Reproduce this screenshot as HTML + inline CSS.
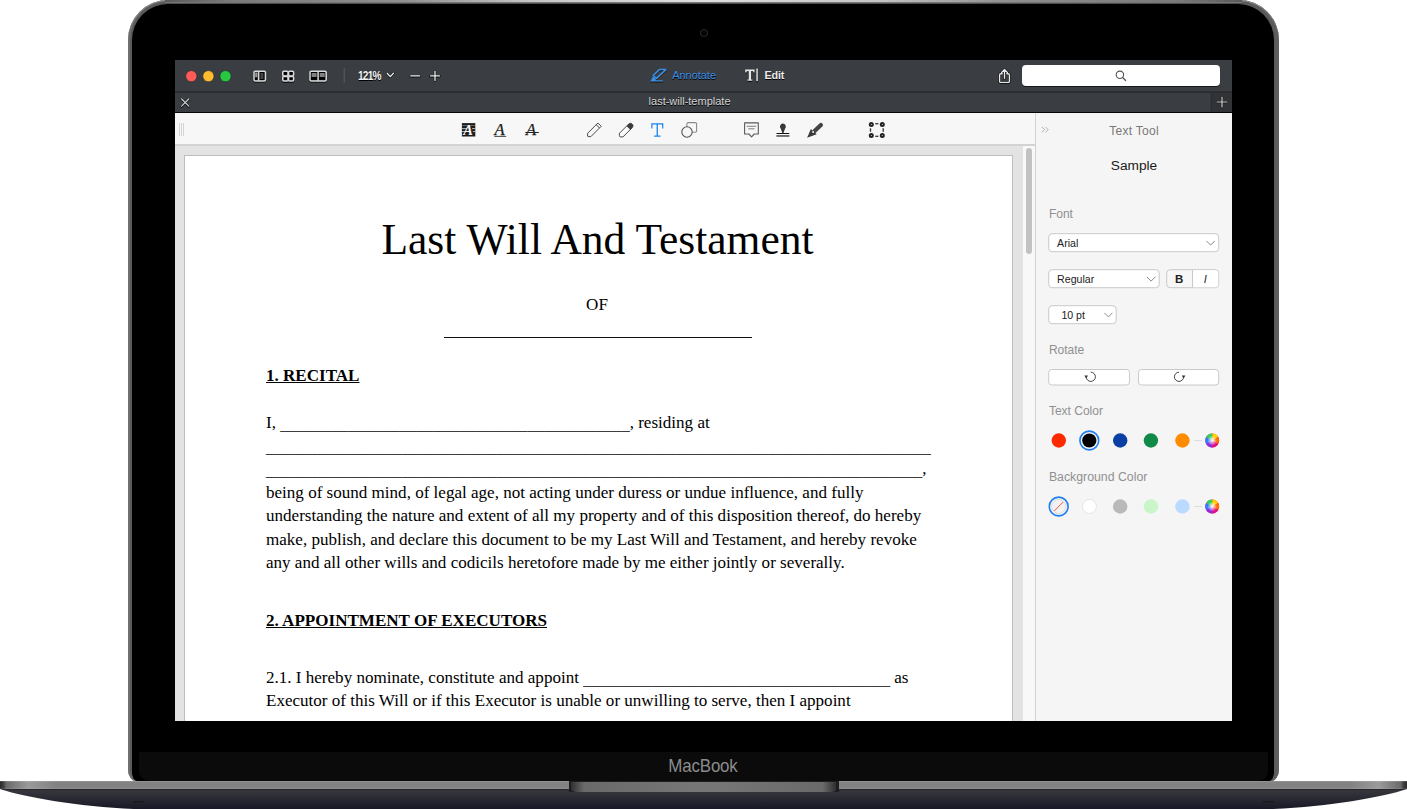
<!DOCTYPE html>
<html><head><meta charset="utf-8">
<style>
*{margin:0;padding:0;box-sizing:border-box}
html,body{width:1407px;height:809px;overflow:hidden;background:#fff;font-family:"Liberation Sans",sans-serif}
.a{position:absolute}
#lid{left:128px;top:0;width:1151px;height:781px;border-radius:40px 40px 8px 8px / 40px 40px 12px 12px;background:#5a5a5a;
 box-shadow:inset 0 1px 0 #909090, inset 2px 0 0 #6f6f6f, inset -3px 0 0 #5e5e5e}
#lidin{left:132px;top:4px;width:1142px;height:777px;border-radius:36px 36px 5px 5px / 36px 36px 9px 9px;background:#000}
#chin{left:139px;top:752px;width:1129px;height:29px;background:#0b0b0b;border-radius:0 0 10px 10px}
#cam{left:700px;top:29px;width:7.6px;height:7.6px;border-radius:50%;border:1px solid #2e2e2e;background:#050505}
#mb{left:603px;top:752px;width:200px;height:28px;text-align:center;color:#8c8c8c;font-size:19px;line-height:28px;letter-spacing:-0.2px;transform:scaleX(0.89)}
#base{left:0;top:781px;width:1407px;height:28px}
#screen{left:175px;top:60px;width:1057px;height:661px;overflow:hidden;background:#e3e3e3}
.doc{font-family:"Liberation Serif",serif;font-size:17.06px;line-height:20px;color:#000;white-space:nowrap}
.ui{white-space:nowrap;font-family:"Liberation Sans",sans-serif}
.u{position:relative;top:2px;color:#3c3c3c}
#sc{left:-175px;top:-60px;width:1407px;height:809px}
</style></head><body>
<div id="lid" class="a"></div>
<div id="lidin" class="a"></div>
<div class="a" style="left:165px;top:0;width:1077px;height:1.6px;background:linear-gradient(90deg,#5a5a5a 0%,#7a7a7a 6%,#909090 22%,#c5c5c5 34%,#dedede 50%,#c5c5c5 66%,#909090 78%,#7a7a7a 94%,#5a5a5a 100%)"></div>
<div class="a" style="left:165px;top:1.6px;width:1077px;height:2.4px;background:linear-gradient(180deg,#8a8a8a,#3a3a3a)"></div>
<div id="cam" class="a"></div>
<div id="chin" class="a"></div>
<div id="mb" class="a">MacBook</div>
<svg id="base" class="a" width="1407" height="28" viewBox="0 0 1407 28">
 <defs>
  <linearGradient id="gband" x1="0" x2="1" y1="0" y2="0">
   <stop offset="0" stop-color="#2a2a2a"/>
   <stop offset="0.0022" stop-color="#3a3a3a"/>
   <stop offset="0.0045" stop-color="#6a6a6a"/>
   <stop offset="0.02" stop-color="#9a9a9a"/>
   <stop offset="0.04" stop-color="#828282"/>
   <stop offset="0.96" stop-color="#828282"/>
   <stop offset="0.98" stop-color="#9a9a9a"/>
   <stop offset="0.9955" stop-color="#6a6a6a"/>
   <stop offset="0.9978" stop-color="#3a3a3a"/>
   <stop offset="1" stop-color="#2a2a2a"/>
  </linearGradient>
  <linearGradient id="gbot" x1="0" x2="0" y1="0" y2="1">
   <stop offset="0" stop-color="#1e1e22"/>
   <stop offset="0.08" stop-color="#36363d"/>
   <stop offset="1" stop-color="#181826"/>
  </linearGradient>
  <linearGradient id="gnotch" x1="0" x2="1" y1="0" y2="0">
   <stop offset="0" stop-color="#303030"/>
   <stop offset="0.05" stop-color="#6a6a6a"/>
   <stop offset="0.5" stop-color="#777"/>
   <stop offset="0.95" stop-color="#6a6a6a"/>
   <stop offset="1" stop-color="#303030"/>
  </linearGradient>
  <linearGradient id="gbandv" x1="0" x2="0" y1="0" y2="1">
   <stop offset="0" stop-color="#fff" stop-opacity="0.18"/>
   <stop offset="0.2" stop-color="#fff" stop-opacity="0"/>
   <stop offset="0.8" stop-color="#fff" stop-opacity="0"/>
   <stop offset="1" stop-color="#fff" stop-opacity="0.12"/>
  </linearGradient>
 </defs>
 <path d="M0 8 L1407 8 C1380 17 1320 27 1259 28.5 L148 28.5 C87 27 27 17 0 8 Z" fill="url(#gbot)"/>
 <rect x="0" y="0" width="1407" height="8" fill="url(#gband)"/>
 <rect x="0" y="0" width="1407" height="8" fill="url(#gbandv)"/>
 <rect x="569" y="0" width="270" height="11" fill="#1e1e22"/>
 <path d="M571 1 L836 1 L836 8 C836 10 835 11 830 11 L578 11 C573 11 571 10 571 8 Z" fill="url(#gnotch)"/>
 <rect x="133" y="20" width="11" height="1.5" fill="#111" opacity="0.6"/>
 <rect x="1263" y="20" width="11" height="1.5" fill="#111" opacity="0.6"/>
</svg>
<div id="screen" class="a"><div id="sc" class="a">
 <!-- title bar -->
 <div class="a" style="left:175px;top:60px;width:1057px;height:31px;background:#3a3d41"></div>
 <div class="a" style="left:175px;top:91px;width:1057px;height:2px;background:#2b2d30"></div>
 <div class="a" style="left:175px;top:93px;width:1057px;height:19px;background:#3a3d41"></div>
 <div class="a" style="left:175px;top:111.5px;width:1057px;height:1.7px;background:#050505"></div>
 <!-- toolbar -->
 <div class="a" style="left:175px;top:113px;width:860px;height:31px;background:#f7f7f7"></div>
 <div class="a" style="left:175px;top:144px;width:860px;height:2px;background:#d3d3d3"></div>
 <!-- right panel -->
 <div class="a" style="left:1034.5px;top:113px;width:1.2px;height:608px;background:#d2d2d2"></div>
 <div class="a" style="left:1036px;top:113px;width:196px;height:608px;background:#f5f5f5"></div>

 <!-- title bar contents -->
 <svg class="a" style="left:175px;top:60px" width="1057" height="53" viewBox="175 60 1057 53">
  <g>
   <circle cx="191.3" cy="76.2" r="5.6" fill="#fc5b57" stroke="#1d2a33" stroke-width="0.6"/>
   <circle cx="208.4" cy="76.2" r="5.6" fill="#fdbb2f" stroke="#1d2a33" stroke-width="0.6"/>
   <circle cx="225.5" cy="76.2" r="5.6" fill="#29c73f" stroke="#1d2a33" stroke-width="0.6"/>
  </g>
  <g fill="none" stroke="#000" stroke-width="1.6" transform="translate(0,0.9)" opacity="0.9">
   <rect x="254" y="71.3" width="11.5" height="9.6" rx="1.2"/>
   <line x1="258.6" y1="71.3" x2="258.6" y2="80.9"/>
   <rect x="282.75" y="71.35" width="5.3" height="4.6" rx="1"/><rect x="288.55" y="71.35" width="5.1" height="4.6" rx="1"/>
   <rect x="282.75" y="76.45" width="5.3" height="4.6" rx="1"/><rect x="288.55" y="76.45" width="5.1" height="4.6" rx="1"/>
   <rect x="310" y="71.3" width="16.2" height="9.6" rx="1.2"/>
   <line x1="318.1" y1="71.3" x2="318.1" y2="80.9"/>
  </g>
  <g fill="#000">
   <rect x="284" y="72.5" width="2.8" height="2.3"/><rect x="289.8" y="72.5" width="2.6" height="2.3"/>
   <rect x="284" y="77.6" width="2.8" height="2.3"/><rect x="289.8" y="77.6" width="2.6" height="2.3"/>
   <rect x="259.6" y="72.4" width="4.9" height="7.5"/><rect x="255" y="72.4" width="2.6" height="7.5"/>
   <rect x="311" y="72.4" width="6.2" height="7.5"/><rect x="319.1" y="72.4" width="6.2" height="7.5"/>
  </g>
  <g fill="none" stroke="#d9d9d9" stroke-width="1.5">
   <rect x="254" y="71.3" width="11.5" height="9.6" rx="1.2"/>
   <line x1="258.6" y1="71.3" x2="258.6" y2="80.9"/>
   <rect x="282.75" y="71.35" width="5.3" height="4.6" rx="1"/><rect x="288.55" y="71.35" width="5.1" height="4.6" rx="1"/>
   <rect x="282.75" y="76.45" width="5.3" height="4.6" rx="1"/><rect x="288.55" y="76.45" width="5.1" height="4.6" rx="1"/>
   <rect x="310" y="71.3" width="16.2" height="9.6" rx="1.2"/>
   <line x1="318.1" y1="71.3" x2="318.1" y2="80.9"/>
  </g>
  <rect x="255.2" y="72.5" width="2.2" height="4.8" fill="#9a9a9a"/>
  <rect x="260.4" y="73" width="3" height="6" fill="#555" opacity="0.8"/>
  <rect x="311.6" y="73" width="5" height="4" fill="#a0a0a0" opacity="0.8"/>
  <rect x="319.7" y="73" width="5" height="4" fill="#a0a0a0" opacity="0.8"/>
  <line x1="344.2" y1="68" x2="344.2" y2="83" stroke="#5a5c60" stroke-width="1"/>
  <!-- chevron, minus, plus -->
  <g fill="none" stroke="#000" stroke-width="2.4" stroke-linecap="round" opacity="0.8">
   <polyline points="387.2,73.3 390.3,76.8 393.4,73.3"/>
   <line x1="410.8" y1="76.4" x2="419.6" y2="76.4"/>
   <line x1="430.6" y1="76.2" x2="439.4" y2="76.2"/><line x1="435" y1="71.6" x2="435" y2="80.6"/>
  </g>
  <g fill="none" stroke="#f0f0f0" stroke-width="1.3" stroke-linecap="round">
   <polyline points="387.2,73.3 390.3,76.6 393.4,73.3"/>
   <line x1="410.8" y1="75.9" x2="419.6" y2="75.9"/>
   <line x1="430.6" y1="75.9" x2="439.4" y2="75.9"/><line x1="435" y1="71.4" x2="435" y2="80.4"/>
  </g>
  <!-- annotate icon -->
  <g transform="translate(0,0.9)" opacity="0.85">
   <path d="M659.3 69.6 L665.8 69.6 L656.5 78.4 L653.2 75.6 Z" fill="none" stroke="#1a0e00" stroke-width="1.5" stroke-linejoin="round"/>
   <path d="M653 76.4 L656 79 L655.6 80.2 L662.8 80.2 L662.8 81.5 L650.3 81.5 Z" fill="#1a0e00"/>
  </g>
  <path d="M659.3 69.6 L665.8 69.6 L656.5 78.4 L653.2 75.6 Z" fill="none" stroke="#3a8ee6" stroke-width="1.5" stroke-linejoin="round"/>
  <path d="M653 76.4 L656 79 L655.6 80.2 L662.8 80.2 L662.8 81.5 L650.3 81.5 Z" fill="#3a8ee6"/>
  <!-- T| edit icon -->
  <g fill="#000" opacity="0.85" transform="translate(0,0.9)">
   <path d="M745.2 69.4 H754.6 V72.6 H753.5 L753.1 71.2 H751 V79.4 H752.3 V80.8 H747.5 V79.4 H748.8 V71.2 H746.7 L746.3 72.6 H745.2 Z"/>
   <rect x="756.1" y="68.6" width="1.9" height="12.8"/>
  </g>
  <g fill="#e6e6e6">
   <path d="M745.2 69.4 H754.6 V72.6 H753.5 L753.1 71.2 H751 V79.4 H752.3 V80.8 H747.5 V79.4 H748.8 V71.2 H746.7 L746.3 72.6 H745.2 Z"/>
   <rect x="756.3" y="68.6" width="1.5" height="12.6"/>
  </g>
  <!-- share icon -->
  <g fill="none" stroke="#000" stroke-width="2.6" stroke-linecap="round" stroke-linejoin="round" opacity="0.85">
   <path d="M1002.2 73.8 H1000.8 Q999.6 73.8 999.6 75 V81.2 Q999.6 82.4 1000.8 82.4 H1008.2 Q1009.4 82.4 1009.4 81.2 V75 Q1009.4 73.8 1008.2 73.8 H1006.8"/>
   <path d="M1004.5 78.2 V69.6 M1001.6 72.4 L1004.5 69.6 L1007.4 72.4"/>
  </g>
  <g fill="none" stroke="#e8e8e8" stroke-width="1.4" stroke-linecap="round" stroke-linejoin="round">
   <path d="M1002.2 73.8 H1000.8 Q999.6 73.8 999.6 75 V81.2 Q999.6 82.4 1000.8 82.4 H1008.2 Q1009.4 82.4 1009.4 81.2 V75 Q1009.4 73.8 1008.2 73.8 H1006.8"/>
   <path d="M1004.5 78.2 V69.6 M1001.6 72.4 L1004.5 69.6 L1007.4 72.4"/>
  </g>
  <!-- search -->
  <rect x="1022" y="65.8" width="198" height="21" rx="4" fill="#000" opacity="0.8"/>
  <rect x="1022" y="65" width="198" height="21" rx="4" fill="#fff"/>
  <circle cx="1119.9" cy="74.8" r="3.7" fill="none" stroke="#555" stroke-width="1.1"/>
  <line x1="1122.6" y1="77.5" x2="1125.6" y2="80.5" stroke="#555" stroke-width="1.2" stroke-linecap="round"/>
  <!-- tab bar -->
  <rect x="1211" y="93" width="21" height="19" fill="#313336"/>
  <line x1="1211.2" y1="93" x2="1211.2" y2="112" stroke="#2a2c2f" stroke-width="1"/>
  <g stroke="#000" stroke-width="2.2" stroke-linecap="round" opacity="0.7">
   <line x1="181.6" y1="99.4" x2="188.8" y2="106.6"/><line x1="188.8" y1="99.4" x2="181.6" y2="106.6"/>
   <line x1="1217" y1="102.2" x2="1227" y2="102.2"/><line x1="1222" y1="97.2" x2="1222" y2="107.2"/>
  </g>
  <g stroke="#d0d0d0" stroke-width="1.2" stroke-linecap="round">
   <line x1="181.6" y1="99" x2="188.8" y2="106.2"/><line x1="188.8" y1="99" x2="181.6" y2="106.2"/>
   <line x1="1217" y1="102" x2="1227" y2="102"/><line x1="1222" y1="97" x2="1222" y2="107"/>
  </g>
 </svg>
 <div class="a ui" style="left:358px;top:67.6px;font-size:12px;line-height:16px;font-weight:bold;color:#f2f2f2;letter-spacing:-0.9px;transform:scaleX(0.84);transform-origin:0 0;text-shadow:0 0.8px 0.5px #000">121%</div>
 <div class="a ui" style="left:672.2px;top:66.6px;font-size:10.95px;line-height:16px;color:#3a8ee6;text-shadow:0 0.7px 0.6px #000">Annotate</div>
 <div class="a ui" style="left:764.6px;top:66.8px;font-size:10.8px;line-height:16px;font-weight:bold;color:#eaeaea;text-shadow:0 0.7px 0.6px #000;letter-spacing:-0.2px">Edit</div>
 <div class="a ui" style="left:648.6px;top:92.8px;font-size:11px;line-height:16px;color:#d6d6d6;text-shadow:0 0.5px 0.5px #000">last-will-template</div>

 <!-- toolbar icons -->
 <div class="a" style="left:179px;top:123px;width:1px;height:13px;background:#d4d4d4"></div>
 <div class="a" style="left:181px;top:123px;width:1px;height:13px;background:#d4d4d4"></div>
 <div class="a" style="left:183px;top:123px;width:1px;height:13px;background:#d4d4d4"></div>
 <svg class="a" style="left:440px;top:113px" width="460" height="31" viewBox="440 113 460 31">
  <!-- highlight text -->
  <rect x="461.9" y="123.1" width="13.4" height="13.4" fill="#1e1e1e"/>
  <g stroke="#f6f6f6" stroke-width="0.8" opacity="0.9">
   <line x1="461.9" y1="125.6" x2="475.3" y2="125.6" opacity="0.5"/>
   <line x1="461.9" y1="128.6" x2="467" y2="128.6"/><line x1="472" y1="128.6" x2="475.3" y2="128.6"/>
   <line x1="461.9" y1="131.6" x2="466" y2="131.6"/><line x1="472.8" y1="131.6" x2="475.3" y2="131.6"/>
  </g>
  <text x="463.3" y="134.6" font-family="Liberation Serif" font-style="italic" font-weight="bold" font-size="14.5" fill="#f6f6f6">A</text>
  <!-- underline A -->
  <text x="494.6" y="135" font-family="Liberation Serif" font-style="italic" font-size="16.5" fill="#1a1a1a" stroke="#1a1a1a" stroke-width="0.25">A</text>
  <line x1="494.3" y1="136.4" x2="506.2" y2="136.4" stroke="#333" stroke-width="0.9"/>
  <!-- strike A -->
  <text x="526.1" y="135" font-family="Liberation Serif" font-style="italic" font-size="16.5" fill="#1a1a1a" stroke="#1a1a1a" stroke-width="0.25">A</text>
  <line x1="525.3" y1="132.5" x2="538.8" y2="132.5" stroke="#222" stroke-width="1"/>
  <!-- pencil -->
  <g fill="none" stroke="#4a4a4a" stroke-width="1" stroke-linejoin="round">
   <path d="M587.6 133.3 L597.9 123.0 L601.2 126.3 L590.9 136.6 L588.2 136.6 Q587.6 136.6 587.6 136 Z"/>
   <line x1="596.2" y1="124.7" x2="599.5" y2="128"/>
  </g>
  <!-- eraser -->
  <path d="M619.4 133.3 L628.6 124.1 Q630.4 122.3 632.2 124.1 Q634 125.9 632.2 127.7 L623 136.9 L620.6 136.9 Q619.4 136.9 619.4 135.7 Z" fill="#fafafa" stroke="#4a4a4a" stroke-width="1" stroke-linejoin="round"/>
  <path d="M626.6 126.1 L628.6 124.1 Q630.4 122.3 632.2 124.1 Q634 125.9 632.2 127.7 L630.2 129.7 Z" fill="#3a3a3a"/>
  <!-- blue T -->
  <path d="M651.3 123.2 H663.3 V128.6 H662.2 L662 124.5 H657.9 V135.4 H660.5 V136.7 H654.1 V135.4 H656.6 V124.5 H652.6 L652.4 128.6 H651.3 Z" fill="#1a82ef"/>
  <!-- shapes -->
  <g fill="none" stroke="#555" stroke-width="1.1">
   <path d="M686.9 126.8 V123.8 Q686.9 122.6 688.1 122.6 H695.4 Q696.6 122.6 696.6 123.8 V131.1 Q696.6 132.3 695.4 132.3 H692.3" stroke="#8a8a8a"/>
   <circle cx="687" cy="132" r="5.2"/>
  </g>
  <!-- comment -->
  <g fill="none" stroke="#5a5a5a" stroke-width="1.1" stroke-linejoin="round">
   <path d="M744.6 122.9 H758.3 V134 H754.3 L751.6 136.8 L748.9 134 H744.6 Z"/>
  </g>
  <g stroke="#888" stroke-width="1.1">
   <line x1="746.6" y1="126.3" x2="756.2" y2="126.3"/>
   <line x1="748.2" y1="128.8" x2="754.6" y2="128.8"/>
  </g>
  <!-- stamp -->
  <path d="M782.9 123.6 A3.0 3.0 0 0 1 785.1 128.6 L783.5 132.9 H782.3 L780.7 128.6 A3.0 3.0 0 0 1 782.9 123.6 Z" fill="#383838"/>
  <rect x="776.4" y="132.9" width="13" height="1.2" rx="0.5" fill="#111"/>
  <rect x="776.4" y="135" width="13" height="1.9" fill="#6a6a6a"/>
  <!-- pen -->
  <line x1="820.9" y1="124.9" x2="814.6" y2="131.0" stroke="#444" stroke-width="4.2" stroke-linecap="round"/>
  <path d="M810.9 128.9 L816.7 134.2 L807.1 137.8 Z" fill="#3a3a3a"/>
  <circle cx="813.1" cy="132" r="0.95" fill="#f7f7f7"/>
  <!-- select -->
  <g fill="none" stroke="#222" stroke-width="2">
   <circle cx="871.3" cy="124.4" r="1.5"/><circle cx="882.3" cy="124.4" r="1.5"/>
   <circle cx="871.3" cy="135.5" r="1.5"/><circle cx="882.3" cy="135.5" r="1.5"/>
  </g>
  <g stroke="#333" stroke-width="1.3">
   <line x1="875.3" y1="123.7" x2="878.4" y2="123.7"/><line x1="875.3" y1="136.3" x2="878.4" y2="136.3"/>
   <line x1="870.5" y1="128.3" x2="870.5" y2="131.7"/><line x1="883.2" y1="128.3" x2="883.2" y2="131.7"/>
  </g>
 </svg>
 <!-- scrollbar -->
 <div class="a" style="left:1022.5px;top:146px;width:12px;height:575px;background:#f8f8f8"></div>
 <div class="a" style="left:1025.6px;top:148px;width:6.4px;height:106px;border-radius:3.2px;background:#c2c2c2"></div>

 <!-- right panel content -->
 <svg class="a" style="left:1036px;top:113px" width="196" height="420" viewBox="1036 113 196 420">
  <defs>
   <radialGradient id="wheelw" cx="0.5" cy="0.5" r="0.5">
    <stop offset="0" stop-color="#fff" stop-opacity="1"/>
    <stop offset="1" stop-color="#fff" stop-opacity="0"/>
   </radialGradient>
  </defs>
  <g fill="none" stroke="#a9a9a9" stroke-width="0.9">
   <polyline points="1042,127 1044.6,129.7 1042,132.4"/>
   <polyline points="1045.6,127 1048.2,129.7 1045.6,132.4"/>
  </g>
  <!-- dropdown boxes -->
  <g fill="#fff" stroke="#c9c9c9" stroke-width="1">
   <rect x="1048.7" y="233.7" width="170" height="18" rx="3.5"/>
   <rect x="1048.7" y="269.7" width="110.5" height="18" rx="3.5"/>
   <rect x="1166.7" y="269.7" width="52" height="18" rx="3.5" fill="#f7f7f7"/>
   <rect x="1048.7" y="305.7" width="67.5" height="18" rx="3.5"/>
   <rect x="1048.7" y="369.5" width="80.8" height="15.5" rx="3"/>
   <rect x="1138.5" y="369.5" width="80.2" height="15.5" rx="3"/>
  </g>
  <line x1="1192.5" y1="270" x2="1192.5" y2="287.5" stroke="#c9c9c9" stroke-width="1"/>
  <path d="M1193 270.2 H1215.2 Q1218.2 270.2 1218.2 273.2 V284.2 Q1218.2 287.2 1215.2 287.2 H1193 Z" fill="#fff"/>
  <g fill="none" stroke="#8a8a8a" stroke-width="1" stroke-linejoin="round">
   <polyline points="1206.4,240.9 1210.6,245.1 1214.8,240.9"/>
   <polyline points="1146.9,276.9 1151.1,281.1 1155.3,276.9"/>
   <polyline points="1104.4,312.9 1108.4,316.9 1112.4,312.9"/>
  </g>
  <!-- rotate icons -->
  <g fill="none" stroke="#444" stroke-width="1">
   <path d="M1090.8 372.2 A4.6 4.6 0 1 1 1086.2 376.8"/>
   <path d="M1179 372.2 A4.6 4.6 0 1 0 1183.6 376.8"/>
  </g>
  <path d="M1084.4 375.6 L1088 375.6 L1086.2 378.4 Z" fill="#333"/>
  <path d="M1181.8 375.6 L1185.4 375.6 L1183.6 378.4 Z" fill="#333"/>
  <!-- text colors -->
  <circle cx="1058.8" cy="440.5" r="7.2" fill="#fd2a00"/>
  <circle cx="1089.3" cy="440.5" r="9.4" fill="none" stroke="#1f7ff2" stroke-width="1.6"/>
  <circle cx="1089.3" cy="440.5" r="7.1" fill="#000"/>
  <circle cx="1120.2" cy="440.5" r="7.2" fill="#0a40a6"/>
  <circle cx="1150.9" cy="440.5" r="7.2" fill="#0f8a47"/>
  <circle cx="1182.4" cy="440.5" r="7.2" fill="#ff8c00"/>
  <line x1="1194" y1="440.5" x2="1202" y2="440.5" stroke="#dcdcdc" stroke-width="1"/>
  <g id="wheel">
   <circle cx="1212.2" cy="440.5" r="6.9" fill="#ff2050"/>
   <path d="M1212.2 440.5 L1212.2 433.6 A6.9 6.9 0 0 1 1218.2 437 Z" fill="#ffd000"/>
   <path d="M1212.2 440.5 L1218.2 437 A6.9 6.9 0 0 1 1218.2 444 Z" fill="#ff6a00"/>
   <path d="M1212.2 440.5 L1218.2 444 A6.9 6.9 0 0 1 1212.2 447.4 Z" fill="#e0108a"/>
   <path d="M1212.2 440.5 L1212.2 447.4 A6.9 6.9 0 0 1 1206.2 444 Z" fill="#8a2be2"/>
   <path d="M1212.2 440.5 L1206.2 444 A6.9 6.9 0 0 1 1206.2 437 Z" fill="#2f7bff"/>
   <path d="M1212.2 440.5 L1206.2 437 A6.9 6.9 0 0 1 1212.2 433.6 Z" fill="#30d060"/>
   <circle cx="1212.2" cy="440.5" r="5" fill="url(#wheelw)"/>
  </g>
  <!-- bg colors -->
  <circle cx="1058.7" cy="506.5" r="9.4" fill="none" stroke="#1f7ff2" stroke-width="1.6"/>
  <circle cx="1058.7" cy="506.5" r="7" fill="#f2f2f2" stroke="#d6d6d6" stroke-width="0.8"/>
  <line x1="1054.2" y1="511" x2="1063.2" y2="502" stroke="#f0543e" stroke-width="1"/>
  <circle cx="1089.4" cy="506.5" r="7" fill="#fff" stroke="#dedede" stroke-width="0.8"/>
  <circle cx="1120.2" cy="506.5" r="7.2" fill="#b9b9b9"/>
  <circle cx="1150.9" cy="506.5" r="7.2" fill="#c9f6c9"/>
  <circle cx="1182.4" cy="506.5" r="7.2" fill="#badaff"/>
  <line x1="1194" y1="506.5" x2="1202" y2="506.5" stroke="#dcdcdc" stroke-width="1"/>
  <use href="#wheel" transform="translate(0,66)"/>
 </svg>
 <div class="a ui" style="left:1109.2px;top:122.9px;font-size:12px;line-height:16px;color:#787878;letter-spacing:0.3px">Text Tool</div>
 <div class="a ui" style="left:1110.8px;top:156.8px;font-size:13.7px;line-height:17px;color:#1a1a1a">Sample</div>
 <div class="a ui" style="left:1048.9px;top:205.9px;font-size:12px;line-height:16px;color:#909090">Font</div>
 <div class="a ui" style="left:1057.1px;top:235.8px;font-size:10.6px;line-height:14px;color:#222">Arial</div>
 <div class="a ui" style="left:1057.1px;top:271.8px;font-size:10.6px;line-height:14px;color:#222">Regular</div>
 <div class="a ui" style="left:1175px;top:272.2px;font-size:11.5px;line-height:14px;color:#222;font-weight:bold">B</div>
 <div class="a ui" style="left:1203.8px;top:272.2px;font-size:11px;line-height:14px;color:#222;font-style:italic">I</div>
 <div class="a ui" style="left:1061.4px;top:308.4px;font-size:10.6px;line-height:14px;color:#222">10 pt</div>
 <div class="a ui" style="left:1048.9px;top:342.1px;font-size:12px;line-height:16px;color:#909090">Rotate</div>
 <div class="a ui" style="left:1048.9px;top:403px;font-size:12px;line-height:16px;color:#909090">Text Color</div>
 <div class="a ui" style="left:1048.9px;top:468.9px;font-size:12.3px;line-height:16px;color:#909090">Background Color</div>
 <!-- page -->
 <div class="a" style="left:184px;top:154.5px;width:829px;height:700px;background:#fff;border:1.5px solid #bdbdbd;border-left-width:1.4px"></div>

 <!-- document text -->
 <div class="a doc" style="left:183px;top:214.2px;width:829px;text-align:center;font-size:43.5px;line-height:50px;letter-spacing:0px">Last Will And Testament</div>
 <div class="a doc" style="left:184px;top:295.2px;width:826px;text-align:center">OF</div>
 <div class="a" style="left:444px;top:337px;width:308px;height:1px;background:#111"></div>
 <div class="a doc" style="left:266px;top:365.5px;font-weight:bold;text-decoration:underline">1. RECITAL</div>
 <div class="a doc" style="left:266px;top:412.5px">I, <span class="u">_________________________________________</span>, residing at</div>
 <div class="a doc" style="left:266px;top:436px"><span class="u">______________________________________________________________________________</span></div>
 <div class="a doc" style="left:266px;top:459.4px"><span class="u">_____________________________________________________________________________</span>,</div>
 <div class="a doc" style="left:266px;top:482.8px">being of sound mind, of legal age, not acting under duress or undue influence, and fully</div>
 <div class="a doc" style="left:266px;top:506.2px">understanding the nature and extent of all my property and of this disposition thereof, do hereby</div>
 <div class="a doc" style="left:266px;top:529.6px">make, publish, and declare this document to be my Last Will and Testament, and hereby revoke</div>
 <div class="a doc" style="left:266px;top:553px">any and all other wills and codicils heretofore made by me either jointly or severally.</div>
 <div class="a doc" style="left:266px;top:610.7px;font-weight:bold;text-decoration:underline">2. APPOINTMENT OF EXECUTORS</div>
 <div class="a doc" style="left:266px;top:667.5px">2.1. I hereby nominate, constitute and appoint <span class="u">____________________________________</span> as</div>
 <div class="a doc" style="left:266px;top:690.9px">Executor of this Will or if this Executor is unable or unwilling to serve, then I appoint</div>
</div></div>
</body></html>
